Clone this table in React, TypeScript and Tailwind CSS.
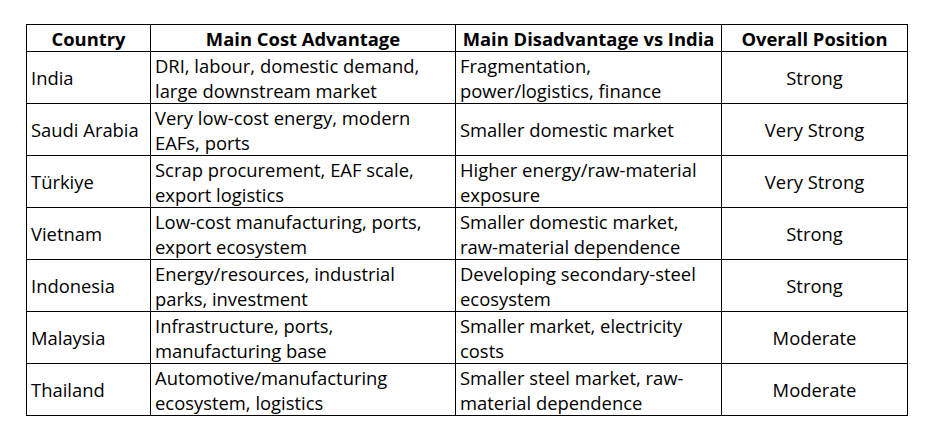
import React from "react";

type Row = {
  country: string;
  advantage: string[];
  disadvantage: string[];
  position: string;
};

const rows: Row[] = [
  { country: "India", advantage: ["DRI, labour, domestic demand,", "large downstream market"], disadvantage: ["Fragmentation,", "power/logistics, finance"], position: "Strong" },
  { country: "Saudi Arabia", advantage: ["Very low-cost energy, modern", "EAFs, ports"], disadvantage: ["Smaller domestic market"], position: "Very Strong" },
  { country: "Türkiye", advantage: ["Scrap procurement, EAF scale,", "export logistics"], disadvantage: ["Higher energy/raw-material", "exposure"], position: "Very Strong" },
  { country: "Vietnam", advantage: ["Low-cost manufacturing, ports,", "export ecosystem"], disadvantage: ["Smaller domestic market,", "raw-material dependence"], position: "Strong" },
  { country: "Indonesia", advantage: ["Energy/resources, industrial", "parks, investment"], disadvantage: ["Developing secondary-steel", "ecosystem"], position: "Strong" },
  { country: "Malaysia", advantage: ["Infrastructure, ports,", "manufacturing base"], disadvantage: ["Smaller market, electricity", "costs"], position: "Moderate" },
  { country: "Thailand", advantage: ["Automotive/manufacturing", "ecosystem, logistics"], disadvantage: ["Smaller steel market, raw-", "material dependence"], position: "Moderate" },
];

const Lines = ({ lines }: { lines: string[] }) => (
  <>
    {lines.map((l, i) => (
      <div key={i} className="whitespace-nowrap">{l}</div>
    ))}
  </>
);

export default function App() {
  return (
    <div className="w-[933px] h-[439px] bg-white pt-[24px] pl-[26px] font-['Open_Sans',sans-serif] text-black">
      <table className="border-collapse table-fixed w-[881px] text-[18.4px] leading-[25px]">
        <colgroup>
          <col className="w-[124px]" />
          <col className="w-[305px]" />
          <col className="w-[266px]" />
          <col className="w-[186px]" />
        </colgroup>
        <thead>
          <tr className="h-[27px]">
            {["Country", "Main Cost Advantage", "Main Disadvantage vs India", "Overall Position"].map((h) => (
              <th key={h} className="border border-black font-bold text-center px-[4px] py-0 leading-[25px] whitespace-nowrap">
                {h}
              </th>
            ))}
          </tr>
        </thead>
        <tbody>
          {rows.map((r) => (
            <tr key={r.country} className="h-[52px]">
              <td className="border border-black px-[4px] py-0 align-middle whitespace-nowrap">{r.country}</td>
              <td className="border border-black px-[4px] py-0 align-middle">
                <Lines lines={r.advantage} />
              </td>
              <td className="border border-black px-[4px] py-0 align-middle">
                <Lines lines={r.disadvantage} />
              </td>
              <td className="border border-black px-[4px] py-0 align-middle text-center">{r.position}</td>
            </tr>
          ))}
        </tbody>
      </table>
    </div>
  );
}
